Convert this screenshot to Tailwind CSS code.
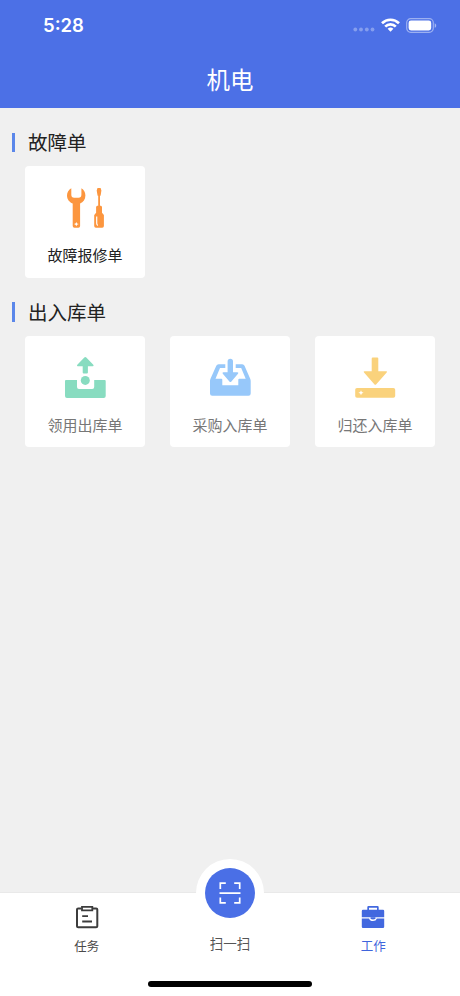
<!DOCTYPE html>
<html lang="zh-CN">
<head>
<meta charset="utf-8">
<meta name="viewport" content="width=device-width, initial-scale=1">
<title>机电</title>
<script src="https://cdn.jsdelivr.net/npm/@tailwindcss/browser@4"></script>
</head>
<body class="font-['Inter','Noto_Sans_CJK_SC',sans-serif]">
<div class="flex h-[996px] w-[460px] flex-col overflow-hidden bg-[#f0f0f0]">
  <header class="flex h-[108px] shrink-0 flex-col bg-[#4c70e6] text-white">
    <div class="flex h-[50px] items-center justify-between pr-[23px] pl-[43px]">
      <span class="text-[18.5px] leading-none font-semibold">5:28</span>
      <div class="flex items-center">
        <svg class="mt-[9px] mr-[6px]" width="22" height="5" viewBox="0 0 22 5" fill="#fff" fill-opacity=".32"><circle cx="2.3" cy="2.5" r="1.9"/><circle cx="8" cy="2.5" r="1.9"/><circle cx="13.8" cy="2.5" r="1.9"/><circle cx="19.5" cy="2.5" r="1.9"/></svg>
        <svg class="mr-[6px]" width="19" height="14" viewBox="0 0 19 14" fill="none" stroke="#fff" stroke-width="2.7"><path d="M1 5.2a12.2 12.2 0 0 1 17 0"/><path d="M4.2 8.6a7.6 7.6 0 0 1 10.6 0"/><path d="M9.5 13.7 6.6 10.8a4.2 4.2 0 0 1 5.8 0z" fill="#fff" stroke="none"/></svg>
        <svg width="31" height="15" viewBox="0 0 31 15"><rect x=".7" y=".7" width="26.6" height="13.6" rx="4" fill="none" stroke="#fff" stroke-opacity=".45" stroke-width="1.2"/><rect x="2.6" y="2.6" width="22.6" height="9.8" rx="2.4" fill="#fff"/><path d="M28.7 5.2c2 .8 2 3.8 0 4.6z" fill="#fff" fill-opacity=".5"/></svg>
      </div>
    </div>
    <h1 class="flex h-[58px] items-center justify-center pt-[4px] text-[23.5px] leading-none">机电</h1>
  </header>

  <main class="flex-1 pt-[19px]">
    <section>
      <h2 class="flex h-[30px] items-center pl-[12px] text-[19.5px] leading-none text-[#222]"><span class="mr-[13px] h-[19px] w-[3px] bg-[#5b87ea]"></span><span class="translate-y-[2px]">故障单</span></h2>
      <div class="mt-[9px] grid grid-cols-3 gap-[25px] px-[25px]">
        <a class="flex h-[112px] flex-col items-center rounded-[4px] bg-white pt-[18px] text-[#222]">
          <svg width="48" height="48" viewBox="0 0 48 48" fill="#fc963f">
            <path d="M10.3 4.2C7.7 5.6 6 8.2 6 11.500c0 3.700 2.300 6.700 5.700 8V42q0 1.700 1.700 1.700h4q1.700 0 1.700-1.700V19.500c3.200-1.300 5.300-4.300 5.300-8 0-3.200-1.500-5.900-4-7.300v6.300q0 3.300-2.900 3.300h-4.300q-2.900 0-2.900-3.300z"/>
            <path d="m15.300 37.900.8 1.500 1.700.7-1.700.7-.8 1.500-.8-1.500-1.600-.7 1.600-.7z" fill="#fff"/>
            <path d="M36.500 4h3.100l.8 2.500-.8 5.200H39v10h1l1 1v6l1.900 2.400v11q0 1.600-1.700 1.600h-6.300q-1.700 0-1.700-1.600v-11l1.900-2.400v-6l1-1h1.100v-10h-.6l-.9-5.200z"/>
            <path d="M35.700 32.500v6.700c0 1 .3 1.700 1.100 2.200" fill="none" stroke="#fff" stroke-width="1.200"/>
          </svg>
          <span class="mt-[14px] text-[15px] leading-[20px]">故障报修单</span>
        </a>
      </div>
    </section>
    <section class="mt-[19px]">
      <h2 class="flex h-[30px] items-center pl-[12px] text-[19.5px] leading-none text-[#222]"><span class="mr-[13px] h-[20px] w-[3px] bg-[#5b87ea]"></span><span class="translate-y-[2px]">出入库单</span></h2>
      <div class="mt-[9px] grid grid-cols-3 gap-[25px] px-[25px] text-[#777]">
        <a class="flex h-[111px] flex-col items-center rounded-[4px] bg-white pt-[18px]">
          <svg width="48" height="48" viewBox="0 0 48 48" fill="#88dcc0">
            <path d="M23.300 3.500q1-.9 2 0l7 7.300q1 1.500-.7 1.500h-4.700v6.200q0 1-1 1h-3.200q-1 0-1-1v-6.200H17q-1.700 0-.7-1.500z"/>
            <circle cx="24.300" cy="26.400" r="4.500"/>
            <path d="M5 26h11v7q0 2 2 2h13.200q2 0 2-2v-7h10.500q1 0 1 1v15q0 2-2 2H6q-2 0-2-2V27q0-1 1-1z"/>
          </svg>
          <span class="mt-[14px] text-[15px] leading-[20px]">领用出库单</span>
        </a>
        <a class="flex h-[111px] flex-col items-center rounded-[4px] bg-white pt-[18px]">
          <svg width="48" height="48" viewBox="0 0 48 48" fill="#97c8fa">
            <path d="M19.300 10.300h-6.700q-1.700 0-2.300 1.500L4.600 24.500Q4 25.700 4 27v12.500q0 2.200 2.200 2.200h36.300q2.200 0 2.200-2.200V27q0-1.300-.6-2.500l-5.600-12.700q-.6-1.500-2.300-1.500h-6.500V14h5.500l4.500 10.800h-6.400q-1 0-1 1v5.500h-16v-5.500q0-1-1-1H9.500L14 14h5.300z"/>
            <path d="M21.600 7.400a2.700 2.700 0 0 1 5.400 0v10.900h4.400q1.600 0 .6 1.500l-6.600 7.700q-1 1-2 0l-6.600-7.700q-1-1.500.6-1.500h4.200z"/>
          </svg>
          <span class="mt-[14px] text-[15px] leading-[20px]">采购入库单</span>
        </a>
        <a class="flex h-[111px] flex-col items-center rounded-[4px] bg-white pt-[18px]">
          <svg width="48" height="48" viewBox="0 0 48 48" fill="#fad27c">
            <path d="M21.700 3.400h4.600q1 0 1 1v12.900H35q1.700 0 .7 1.300L25.300 30.300q-1 1-2 0L13 18.600q-1-1.300.7-1.300h7V4.400q0-1 1-1z"/>
            <rect x="4.200" y="34" width="40" height="9.700" rx="1.800"/>
            <path d="m10 36.200.8 1.700 1.800.8-1.800.8-.8 1.700-.8-1.700-1.800-.8 1.800-.8z" fill="#fff"/>
          </svg>
          <span class="mt-[14px] text-[15px] leading-[20px]">归还入库单</span>
        </a>
      </div>
    </section>
  </main>

  <nav class="relative h-[103px] shrink-0 bg-white shadow-[0_-1px_0_#e9e9e9]">
    <div class="absolute top-[-34px] left-[196px] size-[68px] rounded-full bg-white"></div>
    <div class="relative grid grid-cols-3 px-[15px] text-[#4a4a4a]">
      <a class="flex flex-col items-center pt-[12px]">
        <svg width="24" height="24" viewBox="0 0 24 24" fill="none" stroke="#3c3c3c" stroke-width="2"><path d="M6.500 3.500H3.200q-1.200 0-1.200 1v16.800q0 1 1.200 1h17.900q1.200 0 1.200-1V4.500q0-1-1.200-1h-3.300"/><path d="M7 1.900h10.300v3.400H7zM7.200 11.200h5.800M7.200 16.500h9.800" stroke-width="1.800"/></svg>
        <span class="mt-[9px] text-[12.5px] leading-[18px]">任务</span>
      </a>
      <a class="flex flex-col items-center">
        <span class="-mt-[25px] flex size-[50px] items-center justify-center rounded-full bg-[#4a6fe6]">
          <svg width="22" height="22" viewBox="0 0 22 22" fill="none" stroke="#fff" stroke-width="1.700"><path d="M1.300 7V1.200h5.500M15.200 1.200h5.500V7M20.700 15.500v5.300h-5.500M6.800 20.800H1.300v-5.300M.5 11.200h21"/></svg>
        </span>
        <span class="mt-[16px] text-[13.5px] leading-[20px] text-[#555]">扫一扫</span>
      </a>
      <a class="flex flex-col items-center pt-[12px] text-[#3f65dc]">
        <svg width="24" height="24" viewBox="0 0 24 24" fill="#4268df"><path d="M2 4.800h4.300V2.200q0-1.200 1.200-1.200h9q1.200 0 1.200 1.200v2.600H22q1.200 0 1.200 1.200v6.200H.8V6Q.8 4.800 2 4.800zm6-2v2h8v-2z" fill-rule="evenodd"/><path d="M.8 13.400h7.300q.8 2.600 3.900 2.600t3.900-2.600h7.300v8.400q0 1.200-1.200 1.200H2q-1.200 0-1.200-1.200z"/><path d="M9.600 12.200h4.800v1q-.6 1.300-2.400 1.300t-2.400-1.300z"/></svg>
        <span class="mt-[9px] text-[12.5px] leading-[18px]">工作</span>
      </a>
    </div>
    <div class="absolute bottom-[9px] left-[148px] h-[6px] w-[164px] rounded-full bg-black"></div>
  </nav>
</div>
</body>
</html>
